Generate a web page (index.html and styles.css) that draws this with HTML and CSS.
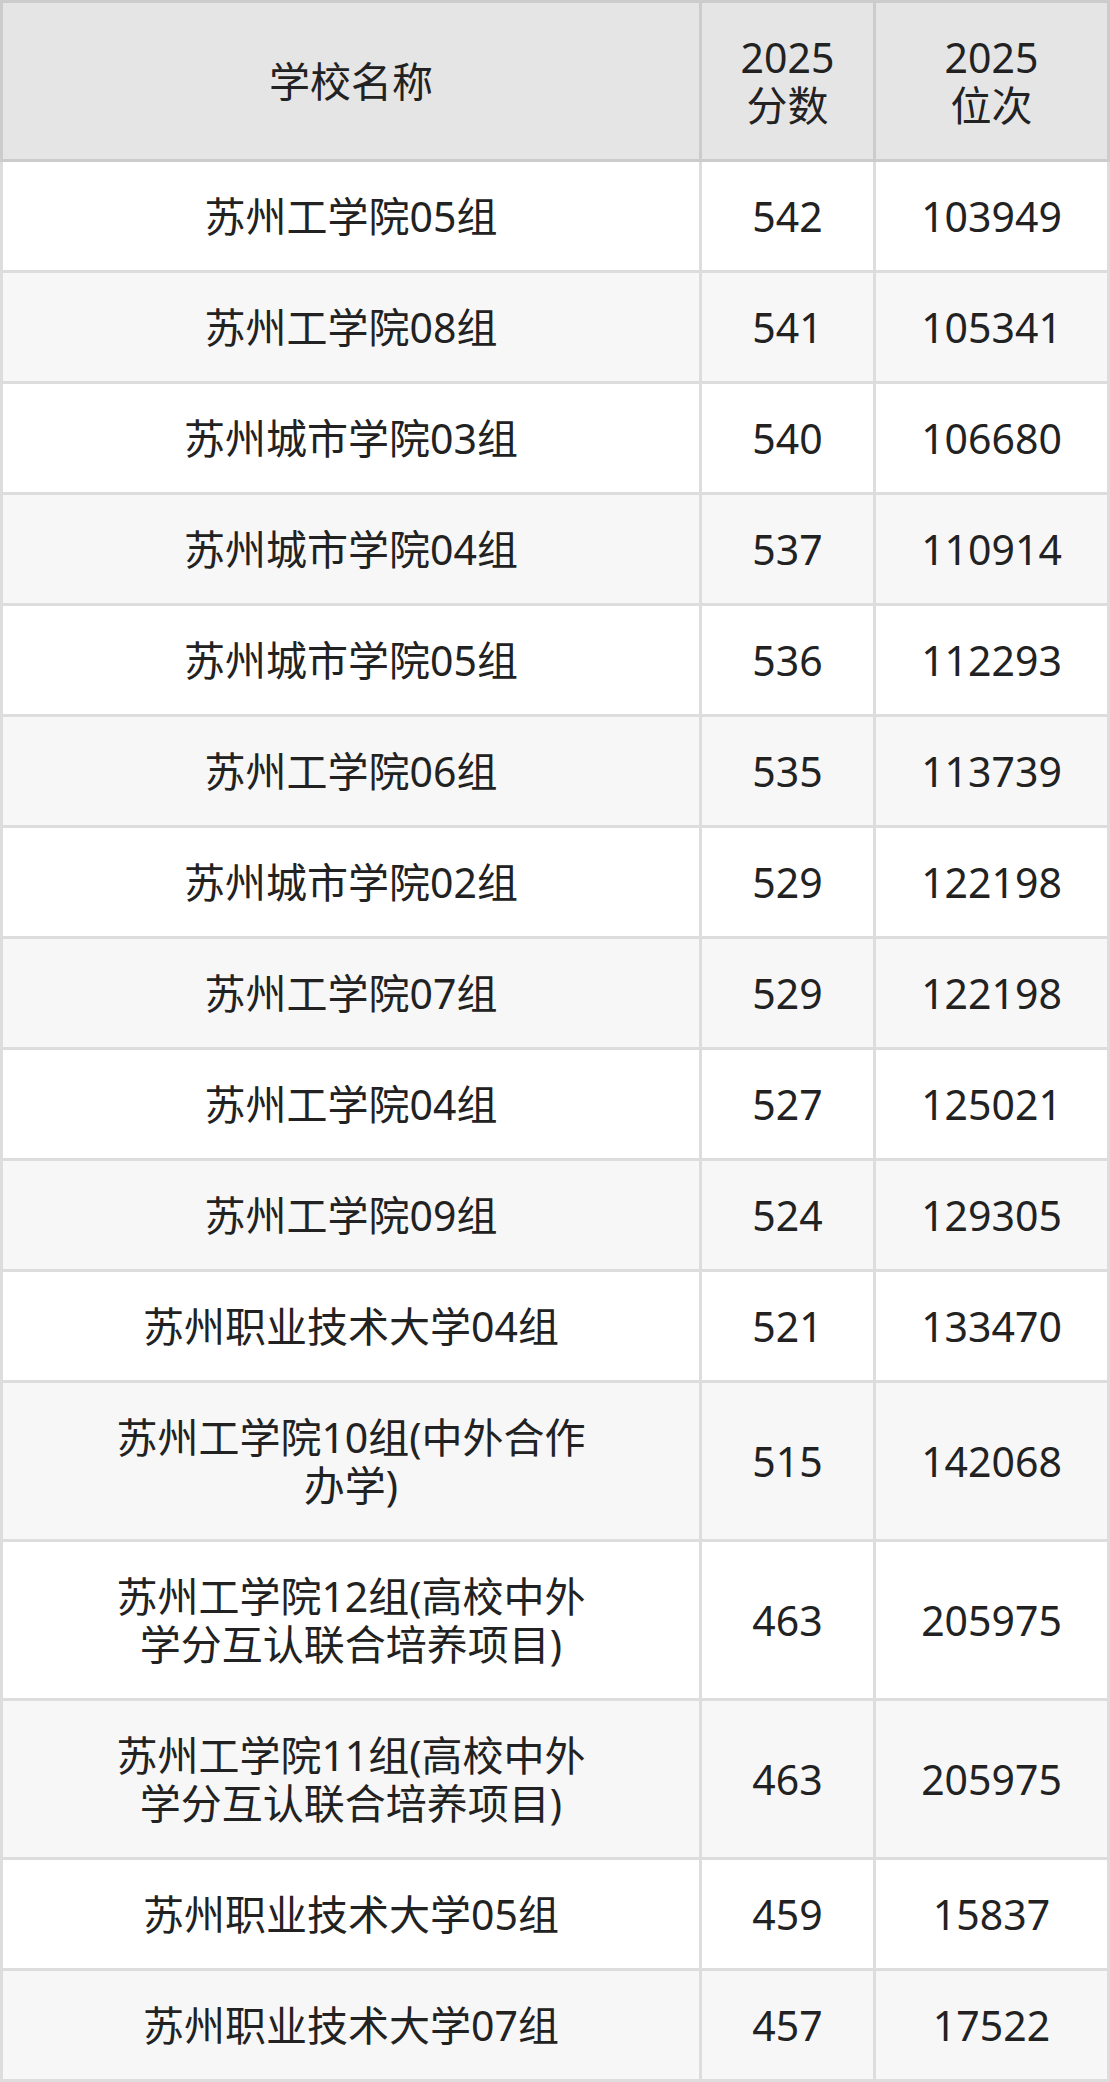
FILE: index.html
```html
<!DOCTYPE html>
<html lang="zh-CN">
<head>
<meta charset="utf-8">
<title>苏州 院校分数</title>
<link rel="stylesheet" href="styles.css">
</head>
<body>
<table class="score-table">
  <colgroup>
    <col class="col-name">
    <col class="col-score">
    <col class="col-rank">
  </colgroup>
  <thead>
    <tr>
      <th class="name">学校名称</th>
      <th>2025<br>分数</th>
      <th>2025<br>位次</th>
    </tr>
  </thead>
  <tbody>
    <tr><td class="name">苏州工学院05组</td><td>542</td><td>103949</td></tr>
    <tr><td class="name">苏州工学院08组</td><td>541</td><td>105341</td></tr>
    <tr><td class="name">苏州城市学院03组</td><td>540</td><td>106680</td></tr>
    <tr><td class="name">苏州城市学院04组</td><td>537</td><td>110914</td></tr>
    <tr><td class="name">苏州城市学院05组</td><td>536</td><td>112293</td></tr>
    <tr><td class="name">苏州工学院06组</td><td>535</td><td>113739</td></tr>
    <tr><td class="name">苏州城市学院02组</td><td>529</td><td>122198</td></tr>
    <tr><td class="name">苏州工学院07组</td><td>529</td><td>122198</td></tr>
    <tr><td class="name">苏州工学院04组</td><td>527</td><td>125021</td></tr>
    <tr><td class="name">苏州工学院09组</td><td>524</td><td>129305</td></tr>
    <tr><td class="name">苏州职业技术大学04组</td><td>521</td><td>133470</td></tr>
    <tr><td class="name">苏州工学院10组(中外合作办学)</td><td>515</td><td>142068</td></tr>
    <tr><td class="name">苏州工学院12组(高校中外学分互认联合培养项目)</td><td>463</td><td>205975</td></tr>
    <tr><td class="name">苏州工学院11组(高校中外学分互认联合培养项目)</td><td>463</td><td>205975</td></tr>
    <tr><td class="name">苏州职业技术大学05组</td><td>459</td><td>15837</td></tr>
    <tr><td class="name">苏州职业技术大学07组</td><td>457</td><td>17522</td></tr>
  </tbody>
</table>
</body>
</html>
```

FILE: styles.css
```css
html, body {
  margin: 0;
  padding: 0;
  background: #ffffff;
}

body {
  font-family: "Noto Sans", "Noto Sans CJK SC", sans-serif;
  font-size: 41px;
  line-height: 48px;
  color: #222222;
}

.score-table {
  border-collapse: collapse;
  table-layout: fixed;
  width: 1110px;
}

.col-name { width: 699px; }
.col-score { width: 174px; }
.col-rank { width: 234px; }

.score-table th,
.score-table td {
  text-align: center;
  vertical-align: middle;
  padding: 30px 8px;
  font-weight: normal;
}

.score-table th {
  background: #e5e5e5;
  border: 3px solid #cccccc;
}

.score-table td {
  border: 3px solid #dddddd;
}

.score-table td.name,
.score-table th.name {
  padding-left: 100px;
  padding-right: 100px;
}

.score-table tbody tr:nth-child(odd) td {
  background: #ffffff;
}

.score-table tbody tr:nth-child(even) td {
  background: #f7f7f7;
}
```
